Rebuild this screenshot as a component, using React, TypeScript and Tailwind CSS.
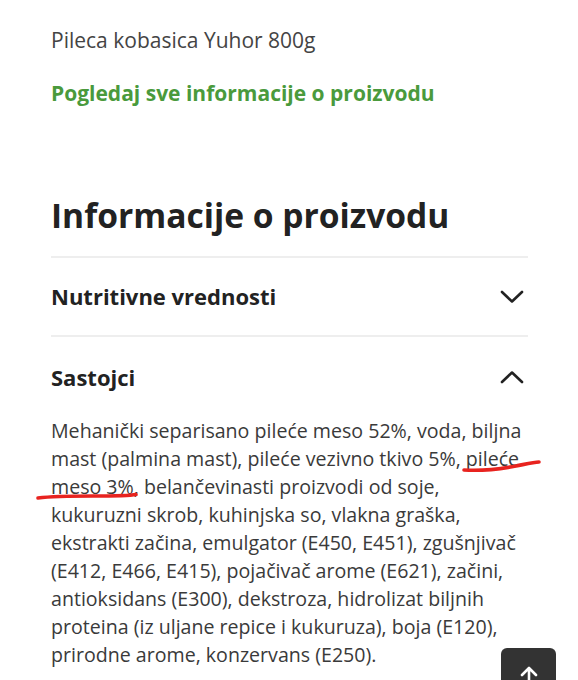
import React from 'react'

function Chevron({ up }: { up?: boolean }) {
  return (
    <svg width="24" height="14" viewBox="0 0 24 14" fill="none" className="shrink-0 mr-[4px]">
      <path
        d={up ? 'M2 12L12 2.5L22 12' : 'M2 2L12 11.5L22 2'}
        stroke="#222"
        strokeWidth="2.6"
        strokeLinecap="round"
        strokeLinejoin="round"
      />
    </svg>
  )
}

export default function App() {
  return (
    <div className="relative w-[578px] h-[680px] overflow-hidden bg-white font-['Open_Sans',sans-serif]">
      <div className="pl-[51px] w-[528px]">
        {/* Product name + link */}
        <p className="pt-[26px] text-[21px] leading-[28px] text-[#444]">Pileca kobasica Yuhor 800g</p>
        <a className="block mt-[25px] text-[21px] leading-[28px] font-bold text-[#4a9a3c]">
          Pogledaj sve informacije o proizvodu
        </a>

        <h2 className="mt-[86px] text-[33.6px] leading-[44px] font-bold text-[#222]">Informacije o proizvodu</h2>

        {/* Accordion */}
        <div className="mt-[19px] border-t-2 border-[#eeeeee]">
          <div className="flex items-center justify-between h-[79px] border-b-2 border-[#eeeeee]">
            <span className="text-[22px] font-bold text-[#222]">Nutritivne vrednosti</span>
            <Chevron />
          </div>
          <div className="flex items-center justify-between h-[80px]">
            <span className="text-[22px] font-bold text-[#222]">Sastojci</span>
            <Chevron up />
          </div>
          <p className="text-[19.6px] leading-[28px] text-[#3a3a3a] whitespace-nowrap">
            Mehanički separisano pileće meso 52%, voda, biljna
            <br />
            mast (palmina mast), pileće vezivno tkivo 5%,{' '}
            <span className="relative">
              pileće
              <svg className="absolute left-[-2px] top-[15px] overflow-visible" width="78" height="14" viewBox="0 0 78 14">
                <path d="M0 10 C 16 11, 36 9, 52 6 C 62 4, 70 2, 75 2" stroke="#e8231f" strokeWidth="3.6" fill="none" strokeLinecap="round" />
              </svg>
            </span>
            <br />
            <span className="relative">
              meso 3%
              <svg className="absolute left-[-13px] top-[20px] overflow-visible" width="102" height="10" viewBox="0 0 102 10">
                <path d="M0 5 C 12 3.5, 32 3, 55 3 C 75 3, 90 3, 98 1.5" stroke="#e8231f" strokeWidth="3.6" fill="none" strokeLinecap="round" />
              </svg>
            </span>
            , belančevinasti proizvodi od soje,
            <br />
            kukuruzni skrob, kuhinjska so, vlakna graška,
            <br />
            ekstrakti začina, emulgator (E450, E451), zgušnjivač
            <br />
            (E412, E466, E415), pojačivač arome (E621), začini,
            <br />
            antioksidans (E300), dekstroza, hidrolizat biljnih
            <br />
            proteina (iz uljane repice i kukuruza), boja (E120),
            <br />
            prirodne arome, konzervans (E250).
          </p>
        </div>
      </div>

      {/* Back to top */}
      <button className="absolute left-[501px] top-[648px] w-[55px] h-[50px] rounded-[6px] bg-[#333333] flex justify-center pt-[18px]">
        <svg width="18" height="20" viewBox="0 0 18 20" fill="none">
          <path d="M9 19V2M2 9L9 2L16 9" stroke="#fff" strokeWidth="2.6" strokeLinecap="round" strokeLinejoin="round" />
        </svg>
      </button>
    </div>
  )
}
